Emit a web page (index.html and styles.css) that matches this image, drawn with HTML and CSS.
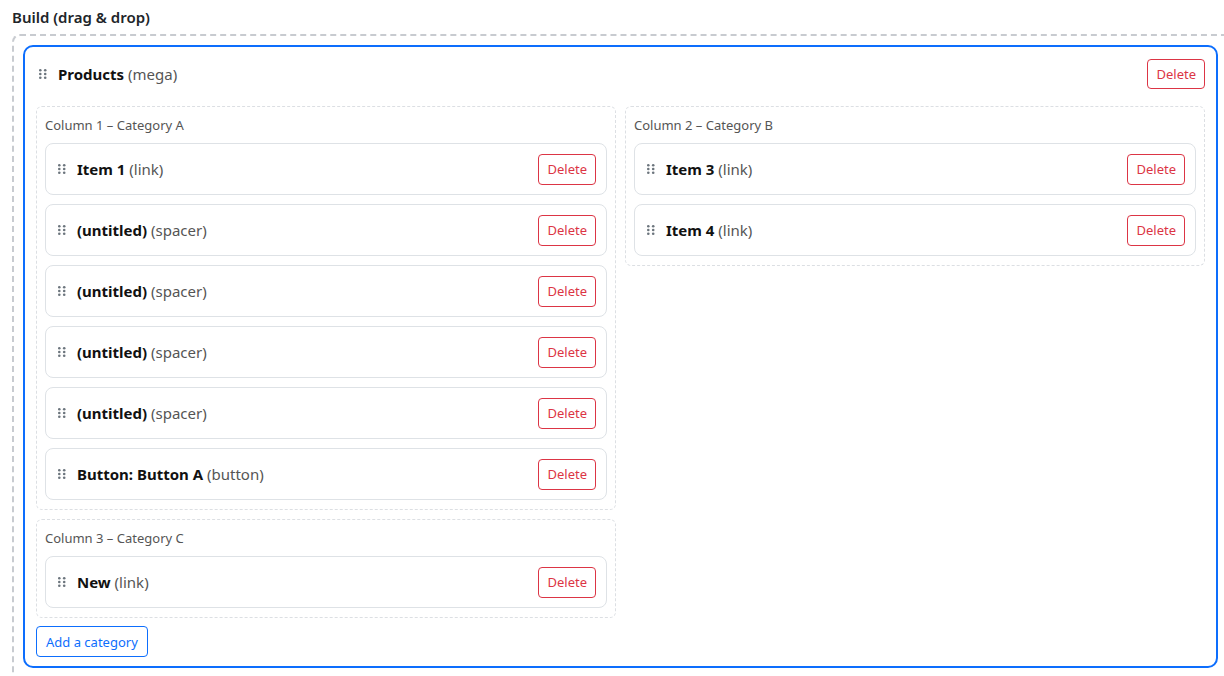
FILE: index.html
```html
<!DOCTYPE html>
<html lang="en">
<head>
  <meta charset="UTF-8">
  <title>Menu builder</title>
  <link rel="stylesheet" href="styles.css">
</head>
<body>

<div class="build-label">Build (drag &amp; drop)</div>

<div class="dropzone">
  <div class="menu-node">
    <div class="node-head">
      <span class="handle"><svg width="8" height="10" viewBox="0 0 8 10"><circle cx="1.3" cy="1.3" r="1.3"/><circle cx="6.2" cy="1.3" r="1.3"/><circle cx="1.3" cy="5" r="1.3"/><circle cx="6.2" cy="5" r="1.3"/><circle cx="1.3" cy="8.7" r="1.3"/><circle cx="6.2" cy="8.7" r="1.3"/></svg></span>
      <span class="node-title"><b>Products</b> <span class="kind">(mega)</span></span>
      <button class="del-btn">Delete</button>
    </div>

    <div class="columns">
      <div class="column">
        <div class="col-title">Column 1 – Category A</div>
        <div class="item">
          <span class="handle"><svg width="8" height="10" viewBox="0 0 8 10"><circle cx="1.3" cy="1.3" r="1.3"/><circle cx="6.2" cy="1.3" r="1.3"/><circle cx="1.3" cy="5" r="1.3"/><circle cx="6.2" cy="5" r="1.3"/><circle cx="1.3" cy="8.7" r="1.3"/><circle cx="6.2" cy="8.7" r="1.3"/></svg></span>
          <span class="node-title"><b>Item 1</b> <span class="kind">(link)</span></span>
          <button class="del-btn">Delete</button>
        </div>
        <div class="item">
          <span class="handle"><svg width="8" height="10" viewBox="0 0 8 10"><circle cx="1.3" cy="1.3" r="1.3"/><circle cx="6.2" cy="1.3" r="1.3"/><circle cx="1.3" cy="5" r="1.3"/><circle cx="6.2" cy="5" r="1.3"/><circle cx="1.3" cy="8.7" r="1.3"/><circle cx="6.2" cy="8.7" r="1.3"/></svg></span>
          <span class="node-title"><b>(untitled)</b> <span class="kind">(spacer)</span></span>
          <button class="del-btn">Delete</button>
        </div>
        <div class="item">
          <span class="handle"><svg width="8" height="10" viewBox="0 0 8 10"><circle cx="1.3" cy="1.3" r="1.3"/><circle cx="6.2" cy="1.3" r="1.3"/><circle cx="1.3" cy="5" r="1.3"/><circle cx="6.2" cy="5" r="1.3"/><circle cx="1.3" cy="8.7" r="1.3"/><circle cx="6.2" cy="8.7" r="1.3"/></svg></span>
          <span class="node-title"><b>(untitled)</b> <span class="kind">(spacer)</span></span>
          <button class="del-btn">Delete</button>
        </div>
        <div class="item">
          <span class="handle"><svg width="8" height="10" viewBox="0 0 8 10"><circle cx="1.3" cy="1.3" r="1.3"/><circle cx="6.2" cy="1.3" r="1.3"/><circle cx="1.3" cy="5" r="1.3"/><circle cx="6.2" cy="5" r="1.3"/><circle cx="1.3" cy="8.7" r="1.3"/><circle cx="6.2" cy="8.7" r="1.3"/></svg></span>
          <span class="node-title"><b>(untitled)</b> <span class="kind">(spacer)</span></span>
          <button class="del-btn">Delete</button>
        </div>
        <div class="item">
          <span class="handle"><svg width="8" height="10" viewBox="0 0 8 10"><circle cx="1.3" cy="1.3" r="1.3"/><circle cx="6.2" cy="1.3" r="1.3"/><circle cx="1.3" cy="5" r="1.3"/><circle cx="6.2" cy="5" r="1.3"/><circle cx="1.3" cy="8.7" r="1.3"/><circle cx="6.2" cy="8.7" r="1.3"/></svg></span>
          <span class="node-title"><b>(untitled)</b> <span class="kind">(spacer)</span></span>
          <button class="del-btn">Delete</button>
        </div>
        <div class="item">
          <span class="handle"><svg width="8" height="10" viewBox="0 0 8 10"><circle cx="1.3" cy="1.3" r="1.3"/><circle cx="6.2" cy="1.3" r="1.3"/><circle cx="1.3" cy="5" r="1.3"/><circle cx="6.2" cy="5" r="1.3"/><circle cx="1.3" cy="8.7" r="1.3"/><circle cx="6.2" cy="8.7" r="1.3"/></svg></span>
          <span class="node-title"><b>Button: Button A</b> <span class="kind">(button)</span></span>
          <button class="del-btn">Delete</button>
        </div>
      </div>

      <div class="column">
        <div class="col-title">Column 2 – Category B</div>
        <div class="item">
          <span class="handle"><svg width="8" height="10" viewBox="0 0 8 10"><circle cx="1.3" cy="1.3" r="1.3"/><circle cx="6.2" cy="1.3" r="1.3"/><circle cx="1.3" cy="5" r="1.3"/><circle cx="6.2" cy="5" r="1.3"/><circle cx="1.3" cy="8.7" r="1.3"/><circle cx="6.2" cy="8.7" r="1.3"/></svg></span>
          <span class="node-title"><b>Item 3</b> <span class="kind">(link)</span></span>
          <button class="del-btn">Delete</button>
        </div>
        <div class="item">
          <span class="handle"><svg width="8" height="10" viewBox="0 0 8 10"><circle cx="1.3" cy="1.3" r="1.3"/><circle cx="6.2" cy="1.3" r="1.3"/><circle cx="1.3" cy="5" r="1.3"/><circle cx="6.2" cy="5" r="1.3"/><circle cx="1.3" cy="8.7" r="1.3"/><circle cx="6.2" cy="8.7" r="1.3"/></svg></span>
          <span class="node-title"><b>Item 4</b> <span class="kind">(link)</span></span>
          <button class="del-btn">Delete</button>
        </div>
      </div>

      <div class="column">
        <div class="col-title">Column 3 – Category C</div>
        <div class="item">
          <span class="handle"><svg width="8" height="10" viewBox="0 0 8 10"><circle cx="1.3" cy="1.3" r="1.3"/><circle cx="6.2" cy="1.3" r="1.3"/><circle cx="1.3" cy="5" r="1.3"/><circle cx="6.2" cy="5" r="1.3"/><circle cx="1.3" cy="8.7" r="1.3"/><circle cx="6.2" cy="8.7" r="1.3"/></svg></span>
          <span class="node-title"><b>New</b> <span class="kind">(link)</span></span>
          <button class="del-btn">Delete</button>
        </div>
      </div>
    </div>

    <button class="add-btn">Add a category</button>
  </div>
</div>

</body>
</html>
```

FILE: styles.css
```css
body {
  margin: 0;
  padding: 7px 0 0 12px;
  background: #fff;
  color: #212529;
  font-family: 'Noto Sans', 'Open Sans', sans-serif;
  font-size: 15px;
  overflow: hidden;
}

.build-label {
  font-weight: 600;
  font-size: 15px;
  line-height: 20px;
  margin-bottom: 7px;
}

.dropzone {
  border: 2px dashed #c8cbd0;
  border-radius: 8px;
  padding: 9px 0 0 9px;
  margin-right: -20px;
  height: 660px;
  box-sizing: border-box;
}

.menu-node {
  width: 1195px;
  box-sizing: border-box;
  border: 2px solid #0d6efd;
  border-radius: 10px;
  padding: 12px 11px 9px 11px;
}

.node-head {
  display: flex;
  align-items: center;
  height: 30px;
  margin-bottom: 17px;
  padding-left: 3px;
}

.handle {
  display: inline-flex;
  width: 8px;
  margin-right: 11px;
  fill: #6c757d;
}

.node-title {
  flex: 1;
  font-size: 15px;
}

.node-title b {
  font-weight: 700;
  color: #111;
}

.kind {
  color: #555;
}

.del-btn {
  font-family: inherit;
  font-size: 13px;
  color: #dc3545;
  background: #fff;
  border: 1px solid #dc3545;
  border-radius: 4px;
  height: 30px;
  padding: 0 8px;
  cursor: pointer;
}

.item .del-btn {
  height: 31px;
}

.columns {
  display: grid;
  grid-template-columns: 1fr 1fr;
  gap: 9px;
  align-items: start;
}

.column {
  border: 1px dashed #dcdfe3;
  border-radius: 6px;
  padding: 9px 8px 9px 8px;
}

.col-title {
  font-size: 13px;
  color: #555;
  line-height: 19px;
  margin-bottom: 8px;
}

.item {
  display: flex;
  align-items: center;
  box-sizing: border-box;
  height: 52px;
  border: 1px solid #dee2e6;
  border-radius: 8px;
  padding: 0 10px 0 12px;
  margin-bottom: 9px;
}

.item:last-child {
  margin-bottom: 0;
}

.add-btn {
  margin-top: 8px;
  font-family: inherit;
  font-size: 13px;
  color: #0d6efd;
  background: #fff;
  border: 1px solid #0d6efd;
  border-radius: 4px;
  height: 31px;
  padding: 0 9px;
  cursor: pointer;
}
```
